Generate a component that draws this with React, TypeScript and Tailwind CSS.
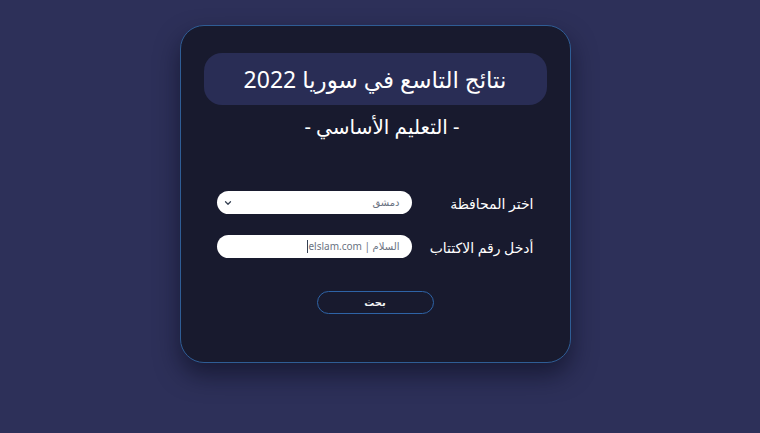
import { ChevronDown } from 'lucide-react';

const font = { fontFamily: '"Noto Sans", "DejaVu Sans", sans-serif' };

export default function App() {
  return (
    <div
      dir="rtl"
      className="min-h-screen w-full bg-[#2d3059] flex justify-center pt-[25px] pr-[10px]"
      style={font}
    >
      {/* Card */}
      <div className="w-[391px] h-[338px] rounded-[24px] border border-[#2f5d95] bg-[#181a2e] shadow-[0_12px_24px_rgba(8,10,25,0.55)] px-[23px] pt-[27px]">
        <div className="h-[52px] rounded-[18px] bg-[#292d55] flex items-center justify-center">
          <h1 className="text-[23px] text-white leading-none">نتائج التاسع في سوريا 2022</h1>
        </div>
        <p className="mt-[12px] text-center text-[20px] text-white leading-none pl-[14px]">- التعليم الأساسي -</p>

        {/* Form */}
        <div className="mt-[54px] flex flex-col gap-[21px] px-[13px]">
          <div className="flex items-center justify-between">
            <label className="text-[14px] text-white pt-[1px]">اختر المحافظة</label>
            <div className="w-[195px] h-[23px] rounded-full bg-white flex items-center justify-between pr-[12px] pl-[6px]">
              <span className="text-[10px] text-gray-500">دمشق</span>
              <ChevronDown className="w-[10px] h-[10px] text-gray-700" strokeWidth={3} />
            </div>
          </div>
          <div className="flex items-center justify-between">
            <label className="text-[14px] text-white pt-[1px]">أدخل رقم الاكتتاب</label>
            <div className="w-[195px] h-[23px] rounded-full bg-white flex items-center pr-[12px]">
              <span className="text-[10px] text-gray-500">السلام | elslam.com</span>
              <span className="w-px h-[13px] bg-gray-700" />
            </div>
          </div>
        </div>

        <div className="mt-[33px] flex justify-center">
          <button className="w-[117px] h-[23px] rounded-full border border-[#2e63a6] text-gray-100 text-[10px] font-bold">بحث</button>
        </div>
      </div>
    </div>
  );
}
